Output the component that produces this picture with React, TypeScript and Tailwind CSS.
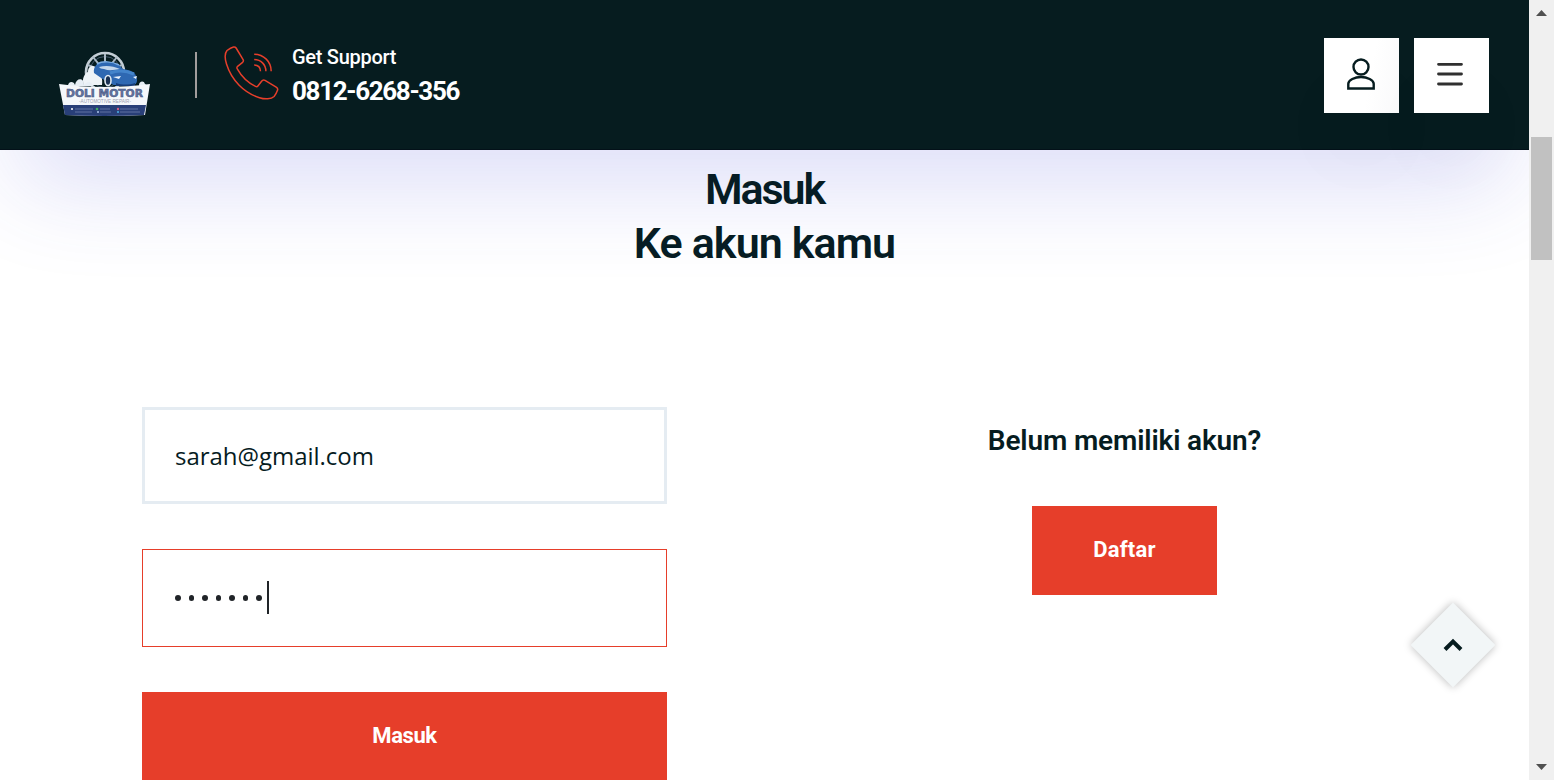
import React from "react";

const heading = "font-['Roboto','Liberation_Sans',sans-serif]";

function Logo() {
  return (
    <svg width="92" height="66" viewBox="0 0 92 66" role="img" aria-label="Doli Motor">
      <g fill="none" stroke="#a9b8c4" strokeWidth="2">
        <circle cx="46" cy="21" r="19" stroke="#c4ced6" strokeWidth="2.6" />
        <circle cx="46" cy="21" r="15.5" stroke="#44596b" strokeWidth="1" />
        <path d="M46 21V3M46 21L34 6M46 21L58 6M46 21L29 14M46 21l17-7" />
      </g>
      <path d="M25 34c-3-6 1-12 4-13 0-7 7-8 9-2 4 3 6 9 5 15z" fill="#eef3f7" />
      <path d="M9 35c0-5 6-5 7-1 1-7 9-8 9 0 4-5 8-3 9 1H9zM80 34c0-4 5-5 6-1l3 2h-9z" fill="#e7eef5" />
      <path d="M35 22c-1-6 3-10 7-11 8-1 17 0 22 7 7 1 12 3 13 7 2 4 1 8-2 9H55l-7-3z" fill="#2e68b2" />
      <path d="M40 16c7-2 14-1 21 2-6 1-11 2-16 0-3 0-4-1-5-2z" fill="#c3d6eb" />
      <path d="M38 13c5-3 15-3 22 1" fill="none" stroke="#79abe0" strokeWidth="1.5" />
      <path d="M51 22c8-3 17-2 24 1" fill="none" stroke="#4384cb" strokeWidth="3" />
      <path d="M54 26l8-1-2 3zM74 26l4-1-1 3z" fill="#eaf4ff" />
      <path d="M57 32c6 2 13 2 19 0v3H57z" fill="#163c78" />
      <ellipse cx="49" cy="29.500" rx="3" ry="5" fill="#172f51" stroke="#e0eaf2" strokeWidth="1.600" />
      <path d="M0 33c14 2 29 3 45 3 17 0 32-1 46-3l-5 31q-40 2-80 0z" fill="#f5f7fb" />
      <path d="M4 54h83l-2 10q-40 2-79 0z" fill="#293f78" />
      <text x="7" y="45.500" textLength="77" lengthAdjust="spacingAndGlyphs" fill="#6674a0" stroke="#435480" strokeWidth=".5" fontFamily="DejaVu Sans, sans-serif" fontWeight="bold" fontSize="9.800">DOLI MOTOR</text>
      <text x="20" y="52" textLength="52" lengthAdjust="spacingAndGlyphs" fill="#9a9eaf" fontFamily="Liberation Sans, sans-serif" fontSize="4.500">-AUTOMOTIVE REPAIR-</text>
      <g strokeWidth="1" stroke="#6072a2">
        <path d="M16 58h18M41 58h10M61 58h18M16 61h17M41 61h11M61 61h20" />
      </g>
      <circle cx="13" cy="58" r="1" fill="#fff" />
      <circle cx="38" cy="58" r="1.300" fill="#42ad62" />
      <circle cx="59" cy="58" r="1.200" fill="#cf5c84" />
      <circle cx="59" cy="61" r="1.100" fill="#48aadf" />
      <circle cx="39" cy="61" r="1" fill="#abc4e8" />
    </svg>
  );
}

function PhoneIcon() {
  return (
    <svg width="56" height="56" viewBox="0 0 56 56" fill="none" stroke="#e63f2b" strokeWidth="1.500" strokeLinejoin="round">
      <path d="M3 5.500C5 4 7.500 2.500 9.500 2c1-.2 2 .1 2.600 1l7 11.600c.7 1.300.3 2.100-.8 3l-4.700 3.700c-.8.700-.9 1.600-.3 2.600 4.200 7.600 10 13.500 18.200 17.500 1 .5 1.900.3 2.600-.6l3.500-4.600c1-1.300 2-1.600 3.400-.8l11.200 6.700c1.500.9 1.900 1.600 1.300 3.200-.8 2.200-1.700 4.200-3.400 6.200-2.900 2.800-9.400 3-14.600 1.200C19.600 47.600 7.500 35 2.500 19 .8 13.500.9 8 3 5.500z" />
      <path d="M30.200 9.300C39.800 9.400 47.100 16.500 47.200 26.200M30.200 14.600c6.700 0 11.600 4.900 11.700 11.600M30.200 19.900c3.800.1 6.200 2.500 6.300 6.300" />
    </svg>
  );
}

function Header() {
  return (
    <header className="relative z-10 flex h-[150px] shrink-0 items-start justify-between border-b border-[#031119] bg-[#061c1f] pl-[59px] pr-10 shadow-[0_50px_100px_-20px_rgba(62,68,215,0.195)]">
      <div className="flex">
        <div className="pt-[51px]"><Logo /></div>
        <div className="mt-[52px] ml-11 h-[46px] w-0.5 bg-[#a19d9c]" />
        <div className="mt-[45px] ml-[27px]"><PhoneIcon /></div>
        <div className={`ml-3 pt-[43px] text-white ${heading}`}>
          <p className="h-[28px] whitespace-nowrap text-[20px] font-medium leading-[28px] tracking-[-0.28px]">Get Support</p>
          <p className="mt-0.5 whitespace-nowrap text-[26px] font-bold leading-[36px] tracking-[-1.35px]">0812-6268-356</p>
        </div>
      </div>
      <div className="flex gap-[15px] pt-[38px]">
        <button aria-label="Akun" className="flex size-[75px] items-center justify-center bg-[linear-gradient(100deg,#ffffff_60%,#f9f9fa)] shadow-[0_50px_70px_rgba(0,0,0,0.025)]">
          <svg className="-translate-x-px -translate-y-0.5" width="30" height="34" viewBox="0 0 30 34" fill="none" stroke="#061c1f" strokeWidth="2.400">
            <circle cx="15" cy="10" r="7.500" />
            <path d="M2.300 31.500v-4.700c0-3.600 6.500-6.800 12.700-6.800s12.700 3.200 12.700 6.800v4.700z" />
          </svg>
        </button>
        <button aria-label="Menu" className="flex size-[75px] items-center justify-center bg-white shadow-[0_50px_70px_rgba(0,0,0,0.025)]">
          <svg className="-translate-x-0.5 -translate-y-0.5" width="28" height="26" viewBox="0 0 28 26" stroke="#303030" strokeWidth="2.800" strokeLinecap="round">
            <path d="M2.500 3.300h23M2.500 13h23M2.500 23h23" />
          </svg>
        </button>
      </div>
    </header>
  );
}

function LoginForm() {
  return (
    <form className="flex w-[525px] flex-col gap-[45px]" onSubmit={(event) => event.preventDefault()}>
      <div className="flex h-[97px] items-center border-[3px] border-[#e5ecf2] bg-white px-[30px] font-['Open_Sans','Noto_Sans',sans-serif] text-[24px] text-[#061c1f]">
        <span className="tracking-[-0.03px]">sarah@gmail.com</span>
      </div>
      <div className="flex h-[98px] items-center border border-[#e63e2a] bg-white px-8 pb-0.5">
        <div className="flex gap-2 pt-0.5">
          {Array.from({ length: 7 }, (_, index) => (
            <span key={index} className="h-1.5 w-[5.5px] rounded-full bg-[#202428]" />
          ))}
        </div>
        <span className="ml-[5px] h-[33px] w-0.5 bg-[#202428]" />
      </div>
      <button className={`h-[89px] bg-[#e63e2a] pb-0.5 text-[22px] font-bold tracking-[-0.4px] text-white ${heading}`}>Masuk</button>
    </form>
  );
}

function Scrollbar() {
  return (
    <aside className="flex h-[780px] w-[25px] shrink-0 flex-col items-center bg-[#f0f0f0]">
      <svg width="25" height="25" viewBox="0 0 25 25"><path d="M7 16h11l-5.500-6z" fill="#505050" /></svg>
      <div className="mt-[112px] h-[123px] w-[21px] bg-[#c1c1c1]" />
      <svg className="mt-auto" width="25" height="25" viewBox="0 0 25 25"><path d="M7 9h11l-5.500 6z" fill="#505050" /></svg>
    </aside>
  );
}

export default function App() {
  return (
    <div className="flex h-[780px] w-[1554px] overflow-hidden bg-white">
      <div className="relative flex w-[1529px] shrink-0 flex-col overflow-hidden bg-white">
        <Header />
        <main className="flex grow flex-col">
          <h1 className={`relative z-20 pt-3 text-center text-[43px] font-semibold leading-[54px] text-[#061c24] ${heading}`}>
            <span className="block tracking-[-2.1px]">Masuk</span>
            <span className="block tracking-[-0.9px]">Ke akun kamu</span>
          </h1>
          <div className="flex shrink-0 pt-[137px] pl-[142px]">
            <LoginForm />
            <section className="ml-[195px] flex w-[525px] flex-col items-center pt-4">
              <h2 className={`text-[28px] font-semibold leading-[36px] tracking-[-0.15px] text-[#061c1f] ${heading}`}>Belum memiliki akun?</h2>
              <button className={`mt-[47px] h-[89px] w-[185px] bg-[#e63e2a] pb-0.5 text-[22px] font-bold tracking-[0.2px] text-white ${heading}`}>Daftar</button>
            </section>
          </div>
        </main>
        <button aria-label="Kembali ke atas" className="absolute top-[615px] left-[1423px] flex size-[60px] rotate-45 items-center justify-center bg-[#f2f6f7] shadow-[0_0_9px_rgba(0,0,0,0.28)]">
          <svg className="-rotate-45" width="20" height="16" viewBox="0 0 20 16" fill="none" stroke="#061c1f" strokeWidth="4"><path d="M2 12.500l8-8 8 8" /></svg>
        </button>
      </div>
      <Scrollbar />
    </div>
  );
}
